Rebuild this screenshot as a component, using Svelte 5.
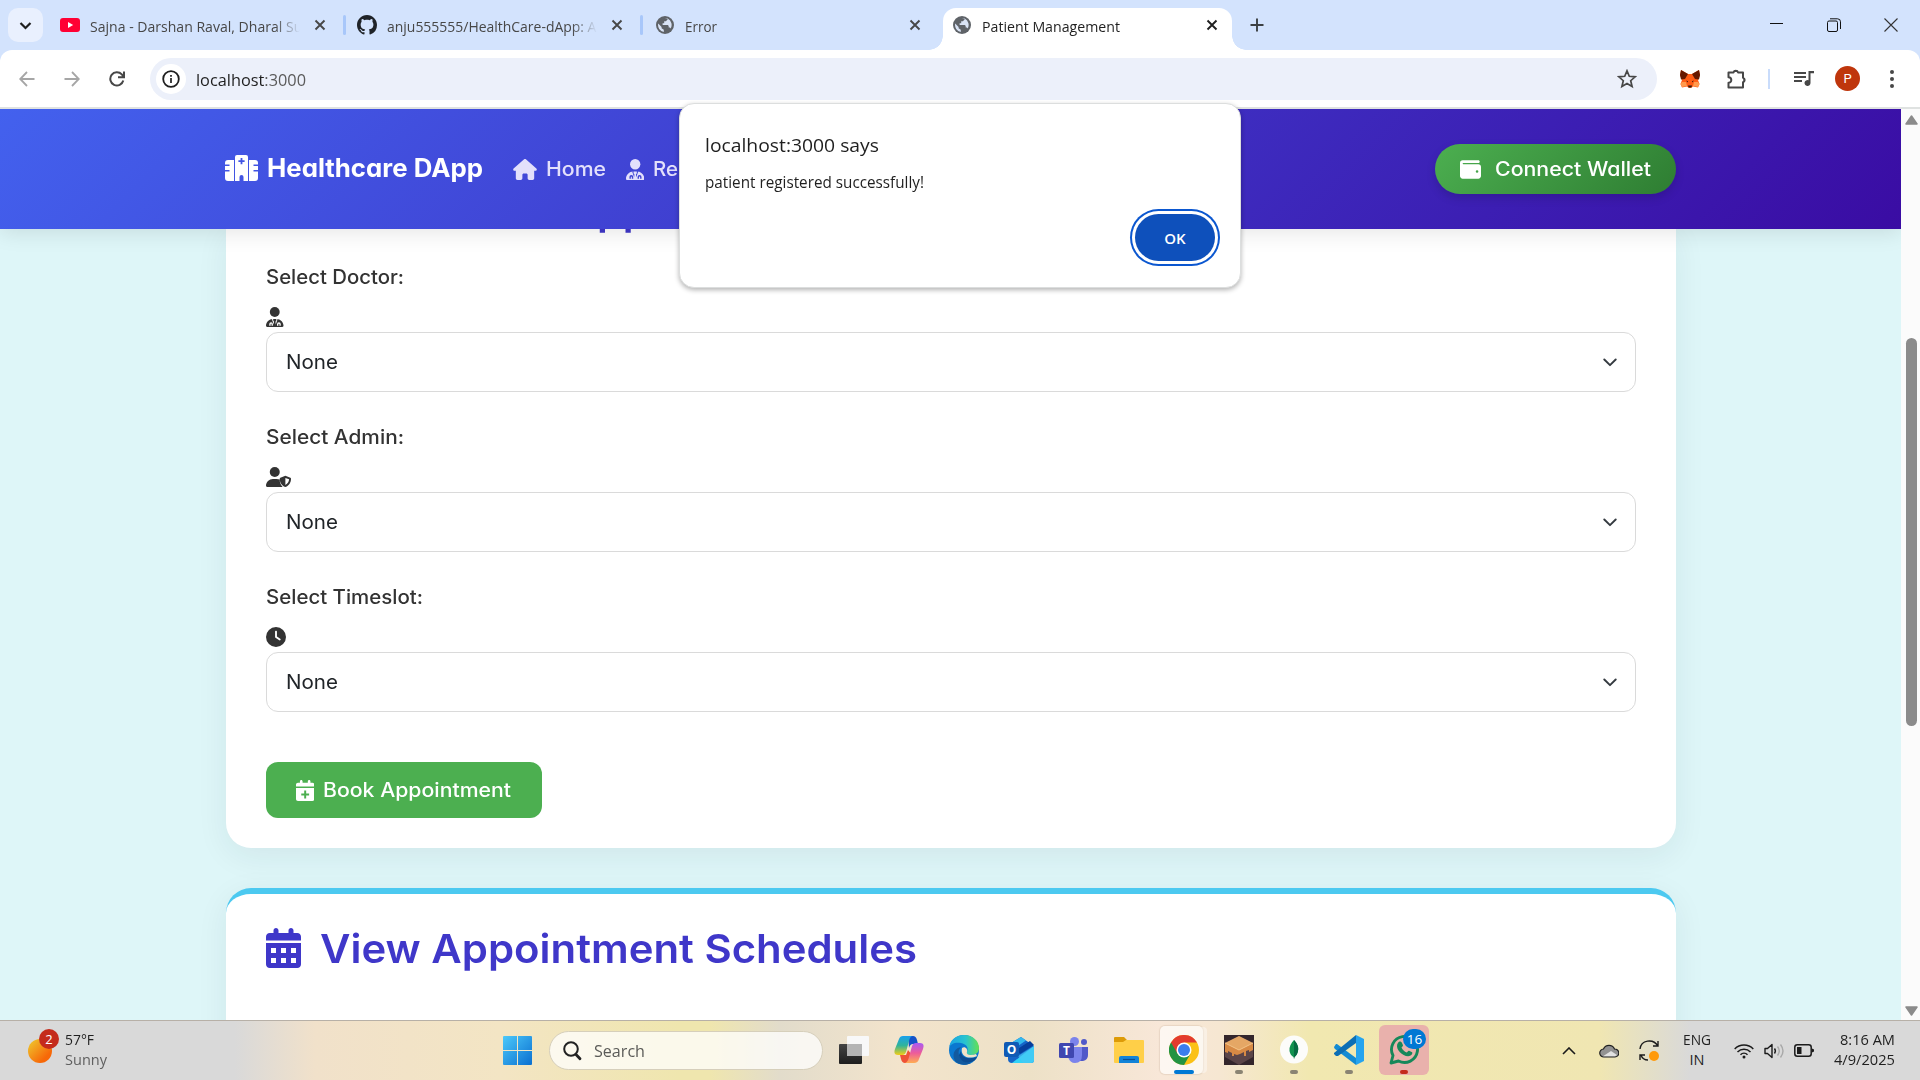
<script>
  // Stretches or condenses a label horizontally so that it occupies the given width.
  function fit(node, width) {
    const natural = node.getBoundingClientRect().width;
    node.style.transform = `scaleX(${width / natural})`;
    node.style.marginRight = width - natural + 'px';
  }

  const fields = [
    { label: 'Select Doctor:', width: 138, icon: 'doctor' },
    { label: 'Select Admin:', width: 138, icon: 'shield' },
    { label: 'Select Timeslot:', width: 157, icon: 'clock' }
  ];
</script>

{#snippet globe()}
  <svg width="18" height="18" viewBox="0 0 18 18">
    <circle cx="9" cy="9" r="9" fill="#5f6368" />
    <path d="M2.2 7.5 5.6 11v1.2l2.2 1.6v2.1A7 7 0 0 1 2.200 7.500zM8 2.100h3.600v1.300L9.900 5.200H8.200v2H6.600v1.700h4.700c.9 0 1.400.7 1.400 1.500v1.200h1.200l.8.8A7 7 0 0 0 12 2.800l-.4-.2A7 7 0 0 0 8 2.100z" fill="#d9e3f5" />
  </svg>
{/snippet}

{#snippet cross()}
  <svg class="cross" width="12" height="12" viewBox="0 0 12 12"><path d="m1.500 1.500 9 9m0-9-9 9" stroke="currentColor" stroke-width="1.900" fill="none" /></svg>
{/snippet}

{#snippet doctor(h)}
  <svg width={h * 0.875} height={h} viewBox="0 0 448 512" fill="currentColor" fill-rule="evenodd">
    <circle cx="224" cy="128" r="126" />
    <path d="M0 482c0-98 80-178 178-178h92c98 0 178 80 178 178 0 17-13 30-30 30H30c-17 0-30-13-30-30zM150 306l48 140 8-70-22-30v-42zM298 306l-48 140-8-70 22-30v-42zM84 480v-46a46 46 0 0 1 92 0v46h-34v-44a12 12 0 0 0-24 0v44zM282 440a48 48 0 1 1 96 0v40h-34v-40a14 14 0 1 0-28 0v40h-34z" />
  </svg>
{/snippet}

{#snippet calendar(h, plus)}
  <svg width={h * 0.875} height={h} viewBox="0 0 448 512" fill="currentColor" fill-rule="evenodd">
    <path d="M128 0c17.700 0 32 14.300 32 32v32h128V32c0-17.700 14.300-32 32-32s32 14.300 32 32v32h48c26.500 0 48 21.500 48 48v48H0v-48c0-26.500 21.500-48 48-48h48V32c0-17.700 14.300-32 32-32z" />
    {#if plus}
      <path d="M0 192h448v272c0 26.500-21.500 48-48 48H48c-26.500 0-48-21.500-48-48zM200 256v72h-72v48h72v72h48v-72h72v-48h-72v-72z" />
    {:else}
      <path d="M0 192h448v272c0 26.500-21.500 48-48 48H48c-26.500 0-48-21.500-48-48zM64 256v64h64v-64zm128 0v64h64v-64zm128 0v64h64v-64zM64 384v64h64v-64zm128 0v64h64v-64zm128 0v64h64v-64z" />
    {/if}
  </svg>
{/snippet}

<div class="screen">
  <div class="tabs">
    <div class="search-tabs"><svg width="13" height="9" viewBox="0 0 13 9"><path d="m1.500 2 5 5 5-5" fill="none" stroke="#1f1f1f" stroke-width="2.200" /></svg></div>
    <div class="tab first">
      <svg width="20" height="14" viewBox="0 0 20 14"><rect width="20" height="14" rx="3" fill="#ff0033" /><path d="m8 4 5.200 3L8 10z" fill="#fff" /></svg>
      <div class="title fade"><span use:fit={218}>Sajna - Darshan Raval, Dharal Sur</span></div>
      {@render cross()}
    </div>
    <i class="split"></i>
    <div class="tab second">
      <svg width="20" height="20" viewBox="0 0 16 16"><path fill="#1f2328" d="M8 0C3.580 0 0 3.580 0 8c0 3.540 2.290 6.530 5.470 7.590.4.070.55-.17.55-.38 0-.19-.01-.82-.01-1.490-2.010.37-2.530-.49-2.690-.94-.09-.23-.48-.94-.82-1.130-.28-.15-.68-.52-.01-.53.63-.01 1.080.58 1.230.82.72 1.210 1.870.87 2.330.66.070-.52.28-.87.51-1.070-1.780-.2-3.640-.89-3.640-3.950 0-.87.31-1.590.82-2.150-.08-.2-.36-1.020.08-2.120 0 0 .67-.21 2.200.82.64-.18 1.320-.27 2-.27s1.360.09 2 .27c1.530-1.040 2.200-.82 2.200-.82.44 1.100.16 1.920.08 2.120.51.56.82 1.270.82 2.150 0 3.070-1.870 3.750-3.650 3.950.29.25.54.73.54 1.480 0 1.070-.01 1.930-.01 2.200 0 .21.15.46.55.38A8.010 8.010 0 0 0 16 8c0-4.420-3.580-8-8-8z" /></svg>
      <div class="title fade"><span use:fit={218}>anju555555/HealthCare-dApp: An</span></div>
      {@render cross()}
    </div>
    <i class="split"></i>
    <div class="tab third">
      {@render globe()}
      <div class="title"><span use:fit={32}>Error</span></div>
      {@render cross()}
    </div>
    <div class="tab active">
      {@render globe()}
      <div class="title"><span use:fit={138}>Patient Management</span></div>
      {@render cross()}
    </div>
    <svg class="plus" width="14" height="14" viewBox="0 0 14 14"><path d="M7 .5v13M.5 7h13" stroke="#3c4043" stroke-width="1.900" /></svg>
    <div class="window">
      <svg width="14" height="14" viewBox="0 0 14 14"><path d="M0 5.500h13" stroke="#111" /></svg>
      <svg width="14" height="14" viewBox="0 0 14 14" fill="none" stroke="#111"><rect x=".5" y="3" width="10" height="10.500" rx="1.500" /><path d="M3 .8h7.500a3 3 0 0 1 3 3V11" /></svg>
      <svg width="14" height="14" viewBox="0 0 14 14"><path d="m.5.5 13 13m0-13-13 13" stroke="#333" stroke-width="1.100" /></svg>
    </div>
  </div>

  <div class="toolbar-wrap">
    <div class="toolbar">
      <div class="nav">
        <svg width="16" height="16" viewBox="0 0 16 16" fill="none" stroke="#a6a6a6" stroke-width="1.800"><path d="M15.500 8H1.500M8 1 1.200 8 8 15" /></svg>
        <svg width="16" height="16" viewBox="0 0 16 16" fill="none" stroke="#a6a6a6" stroke-width="1.800"><path d="M.5 8h14M8 1l6.800 7L8 15" /></svg>
        <svg width="16" height="16" viewBox="0 0 16 16" fill="none" stroke="#474747" stroke-width="2"><path d="M14.300 9.500A6.600 6.600 0 1 1 12.800 3.400L14.500 5.500M15 .5v5.800H9" /></svg>
      </div>
      <div class="omnibox">
        <div class="info"><svg width="18" height="18" viewBox="0 0 18 18" fill="none" stroke="#1f1f1f"><circle cx="9" cy="9" r="7.800" stroke-width="1.800" /><path d="M9 8v5M9 5v1.700" stroke-width="1.700" /></svg></div>
        <div class="url"><span use:fit={110}><b>localhost</b>:3000</span></div>
        <svg class="star" width="20" height="20" viewBox="0 0 20 20"><path d="m10 1.800 2.300 5.500 5.900.5-4.500 3.900 1.400 5.800-5.100-3.100-5.100 3.100 1.400-5.800-4.500-3.900 5.900-.5z" fill="none" stroke="#474747" stroke-width="1.700" /></svg>
      </div>
      <div class="extensions">
        <svg width="20" height="18" viewBox="0 0 20 18">
          <path d="M1 0l7 4h4l7-4 1 5-2 5 1.500 4-1.500 3.500-5-1-2 1.500H9l-2-1.500-5 1L.5 14 2 10 0 5z" fill="#ff5c16" /><path d="M1 0l7 4-3 5-4 .5L0 5zM19 0l-7 4 3 5 4 .5 1-4.500z" fill="#661800" />
          <path d="M2 12h4l1 4-5 1-1.500-3zM18 12h-4l-1 4 5 1 1.500-3z" fill="#ff9a4d" /><path d="M6 10.500l2 .7-.3 1.300zM14 10.500l-2 .7.3 1.300zM8 15.500h4l-.5 2h-3z" fill="#33190f" />
        </svg>
        <svg width="22" height="22" viewBox="0 0 22 22"><path d="M2.500 4.500h5a2.400 2.400 0 0 1 4.600 0H17v5.300a2.300 2.300 0 0 1 0 4.400v5.300H2.500v-4.700a2.800 2.800 0 0 0 0-5.600z" fill="none" stroke="#474747" stroke-width="2" stroke-linejoin="round" /><path d="M7.500 4a2.400 2.400 0 0 1 4.600 0zM17.500 9.800v4.400a2.300 2.300 0 0 0 0-4.400z" fill="#474747" /></svg>
        <i class="rule"></i>
        <svg width="20" height="16" viewBox="0 0 20 16" fill="#474747"><path d="M0 1h12v2H0zM0 5h12v2H0zM0 9h8v2H0zM14.500 0H20v2.200h-3.500V12a3 3 0 1 1-2-2.800z" /></svg>
        <div class="avatar">P</div>
        <svg width="4" height="18" viewBox="0 0 4 18" fill="#474747"><circle cx="2" cy="2" r="2" /><circle cx="2" cy="9" r="2" /><circle cx="2" cy="16" r="2" /></svg>
      </div>
    </div>
  </div>

  <div class="viewport">
    <div class="page">
      <header>
        <svg width="33" height="26" viewBox="0 0 33 26" fill="#fff" fill-rule="evenodd"><path d="M12 0h9a2 2 0 0 1 2 2v24h-4.500v-4a2 2 0 0 0-4 0v4H10V2a2 2 0 0 1 2-2zM15.600 3v2.200h-2.200v1.800h2.200v2.200h1.800V7h2.200V5.200h-2.200V3zM3 5h6v21H3a3 3 0 0 1-3-3v-6.500h4.500v-1.500H0v-4h4.500V9.500H0V8a3 3 0 0 1 3-3zM24 5h6a3 3 0 0 1 3 3v1.500h-4.500V11H33v4h-4.500v1.500H33V23a3 3 0 0 1-3 3h-6z" /></svg>
        <div class="brand"><span use:fit={216}>Healthcare DApp</span></div>
        <div class="link home">
          <svg width="24" height="21" viewBox="0 0 576 512" fill="currentColor"><path d="M575.800 255.500c0 18-15 32.100-32 32.100h-32l.7 160.200c0 2.700-.2 5.400-.5 8.100V472c0 22.100-17.900 40-40 40H392c-22.100 0-40-17.900-40-40v-88c0-17.700-14.300-32-32-32h-64c-17.700 0-32 14.300-32 32v88c0 22.100-17.900 40-40 40h-80c-22.100 0-40-17.900-40-40V287.600H32c-18 0-32-14-32-32.100 0-9 3-17 10-24L266.400 8c7-7 15-8 22-8s15 2 21 7l255.400 224.500c8 7 12 15 11 24z" /></svg>
          <span use:fit={60}>Home</span>
        </div>
        <div class="link reg">{@render doctor(21)}<span use:fit={25}>Re</span></div>
        <button class="wallet">
          <svg width="21" height="21" viewBox="0 0 512 512" fill="#fff"><path d="M64 32C28.700 32 0 60.700 0 96v320c0 35.300 28.700 64 64 64h384c35.300 0 64-28.700 64-64V192c0-35.300-28.700-64-64-64H80c-8.800 0-16-7.200-16-16s7.200-16 16-16h368c17.700 0 32-14.300 32-32s-14.300-32-32-32zm352 240a32 32 0 1 1 0 64 32 32 0 1 1 0-64z" /></svg>
          <span use:fit={156}>Connect Wallet</span>
        </button>
      </header>
      <main>
        <section class="card booking">
          <h2 class="scrolled"><span use:fit={246}>Schedule an </span><span use:fit={258}>Appointment</span></h2>
          {#each fields as field}
            <div class="field">
              <div class="label"><span use:fit={field.width}>{field.label}</span></div>
              <div class="glyph">
                {#if field.icon === 'doctor'}
                  {@render doctor(20)}
                {:else if field.icon === 'shield'}
                  <svg width="25" height="20" viewBox="0 0 640 512" fill="currentColor" fill-rule="evenodd"><circle cx="224" cy="128" r="128" /><path d="M178 304h92c29 0 56 7 80 19 0 75 24 139 75 185-3 3-8 4-11 4H30c-17 0-30-13-30-30 0-98 80-178 178-178zM496 226l128 50c8 3 16 12 16 22 0 80-33 171-144 214-111-43-144-134-144-214 0-10 8-19 16-22zm0 53v180c63-31 91-85 95-143z" /></svg>
                {:else}
                  <svg width="20" height="20" viewBox="0 0 512 512" fill="currentColor" fill-rule="evenodd"><path d="M256 0a256 256 0 1 1 0 512A256 256 0 1 1 256 0zM232 120v136c0 8 4 15.500 10.700 20l96 64c11 7.400 25.900 4.400 33.300-6.700s4.400-25.900-6.700-33.300L280 243.200V120c0-13.300-10.700-24-24-24s-24 10.700-24 24z" /></svg>
                {/if}
              </div>
              <div class="select">
                <span use:fit={52}>None</span>
                <svg width="14" height="9" viewBox="0 0 14 9"><path d="m1.300 1.500 5.700 5.700 5.700-5.700" fill="none" stroke="#343a40" stroke-width="1.900" stroke-linecap="round" stroke-linejoin="round" /></svg>
              </div>
            </div>
          {/each}
          <button class="book">{@render calendar(21, true)}<span use:fit={188}>Book Appointment</span></button>
        </section>
        <section class="card schedules">
          <h2>{@render calendar(40, false)}<span use:fit={597}>View Appointment Schedules</span></h2>
        </section>
      </main>
    </div>
    <div class="scrollbar">
      <svg width="13" height="10" viewBox="0 0 13 10"><path d="M6.500 1 12 9H1z" fill="#8b8b8b" stroke="#8b8b8b" stroke-linejoin="round" stroke-width="1.500" /></svg>
      <i></i>
      <svg class="down" width="13" height="10" viewBox="0 0 13 10"><path d="M6.500 9 12 1H1z" fill="#8b8b8b" stroke="#8b8b8b" stroke-linejoin="round" stroke-width="1.500" /></svg>
    </div>
  </div>

  <div class="taskbar">
    <div class="weather">
      <div class="sun"><b>2</b></div>
      <div class="lines"><span use:fit={29}>57°F</span><span class="dim" use:fit={42}>Sunny</span></div>
    </div>
    <svg class="start" width="29" height="29" viewBox="0 0 29 29">
      <defs><linearGradient id="win" x1="0" y1="0" x2="1" y2="1" gradientUnits="objectBoundingBox"><stop stop-color="#4cc9fa" /><stop offset="1" stop-color="#0a6fd0" /></linearGradient></defs>
      <path d="M1 0h13v14H0V1q0-1 1-1zM15 0h13q1 0 1 1v13H15zM0 15h14v14H1q-1 0-1-1zM15 15h14v13q0 1-1 1H15z" fill="url(#win)" />
    </svg>
    <div class="search">
      <svg width="19" height="20" viewBox="0 0 19 20" fill="none" stroke="#222" stroke-linecap="round"><circle cx="8" cy="8" r="6.800" stroke-width="2" /><path d="m13 13.500 4 4.300" stroke-width="2.800" /></svg>
      <span use:fit={51}>Search</span>
    </div>
    <div class="apps">
      <div class="app"><svg viewBox="0 0 30 30"><defs><linearGradient id="tv" x1="0" y1="0" x2="0" y2="1"><stop stop-color="#444" /><stop offset="1" stop-color="#1d1d1d" /></linearGradient></defs><rect x="0" y="9" width="23" height="20" rx="1" fill="url(#tv)" /><rect x="8" y="1" width="22" height="20" rx="1" fill="#f8f8f8" /><path d="M8 9h15v12H8z" fill="#b4b4b4" /></svg></div>
      <div class="app"><svg viewBox="0 0 30 30">
        <defs>
          <linearGradient id="c1" x1="0" y1="0" x2="0" y2="1"><stop stop-color="#18a0ee" /><stop offset=".5" stop-color="#30b49a" /><stop offset="1" stop-color="#f4cd16" /></linearGradient>
          <linearGradient id="c2" x1="0" y1="0" x2="0" y2="1"><stop stop-color="#a95af4" /><stop offset=".5" stop-color="#ed5c9a" /><stop offset="1" stop-color="#ffad53" /></linearGradient>
        </defs>
        <path d="M14 1h5q3 0 4 4l1 4h-5q-3 0-4 4z" fill="#1553c9" />
        <path d="M17 1H9Q6 1 5 4L1 14q-2 6 3 6h5q2 0 3-3l3-11q1-5 4-5z" fill="url(#c1)" />
        <path d="M6 20h6l2-5 4 5-3 8H11q-3 0-4-4z" fill="#ee5237" />
        <path d="M13 28h7q4 0 5-4l4-10q2-6-3-6h-4q-3 0-4 3l-3 11q-1 5-4 6z" fill="url(#c2)" />
      </svg></div>
      <div class="app"><svg viewBox="0 0 30 30">
        <defs><linearGradient id="e1"><stop stop-color="#1ba3e4" /><stop offset=".55" stop-color="#29c4cf" /><stop offset="1" stop-color="#65e052" /></linearGradient></defs>
        <circle cx="15" cy="15" r="15" fill="#0b78d0" />
        <path d="M0 13C1 5 7 0 15 0c9 0 15 6 15 13 0 5-4 7-8 7-3 0-5-1-4-3 2-5-1-8-6-9C6 7 1 9 0 13z" fill="url(#e1)" />
        <path d="M10 15c-2 7 4 13 12 13-5 3-11 2-15-1-5-6-2-14 5-15z" fill="#125a9f" />
        <path d="M12 16c0 6 6 9 16 6l-1 2c-7 7-16 3-17-4z" fill="#0c4b91" />
        <path d="M13 13c3-2 6 1 5 4-1 3 4 4 9 2l1 2c-9 4-17 0-15-8z" fill="#f1e2c8" />
      </svg></div>
      <div class="app"><svg viewBox="0 0 30 30"><path d="M4 10 17 2l13 9v14q0 3-3 3H8q-4 0-4-4z" fill="#1565c8" /><path d="M4 10 17 2l5 3.500L8 15z" fill="#34b9ee" /><path d="m12 15 14-9 4 4-14 9z" fill="#073f9c" /><path d="M30 11v14q0 3-3 3H8l22-17z" fill="#31d2f7" /><path d="M30 11 14 21l5 7h8q3 0 3-3z" fill="#49c8f3" opacity=".7" /><rect y="7" width="15" height="15" rx="2" fill="#0f5ab5" /></svg><em class="o">O</em></div>
      <div class="app"><svg viewBox="0 0 30 30"><circle cx="15.500" cy="6.500" r="4.500" fill="#7b83eb" /><circle cx="25" cy="7" r="3" fill="#5059c9" /><path d="M19 12h10v8q0 5-5 6h-5z" fill="#5059c9" /><path d="M9 12h14v8q0 8-7 8-5 0-7-6z" fill="#7b83eb" /><rect y="8" width="15" height="15" rx="1.500" fill="#4047b0" /></svg><em class="t">T</em></div>
      <div class="app"><svg viewBox="0 0 30 30"><path d="M0 3q0-1 1-1h9l3 3h16v7H0z" fill="#dd9b08" /><path d="M0 7h9l3-2h17q1 0 1 1v21q0 1-1 1H1q-1 0-1-1z" fill="#ffcf48" /><path d="M5 28v-5q0-2 2-2h16q2 0 2 2v5z" fill="#1283d8" /><path d="M9 24.500h12" stroke="#0b4f94" stroke-width="1.200" /></svg></div>
      <div class="app chrome"><svg viewBox="0 0 30 30"><circle cx="15" cy="15" r="15" fill="#fbc116" /><path d="M15 15 2 7.500A15 15 0 0 0 15 30l6.500-11.300z" fill="#229342" /><path d="M15 15V7.500h13A15 15 0 0 0 2 7.500l6.500 11z" fill="#e33b2e" /><circle cx="15" cy="15" r="7.500" fill="#fff" /><circle cx="15" cy="15" r="6" fill="#3b7ded" /></svg><i class="run wide"></i></div>
      <div class="app"><svg viewBox="0 0 30 30"><path d="M0 0h30v30H0z" fill="#34262c" /><path d="m15 1 14 7v14l-14 8-14-8V8z" fill="#5b4548" /><path d="M1 8v9l3 1v-2l4 2v3h2v-2l3 1 3-1 4-2v4h2v-5l3-1v2l4-2V8l-14 6z" fill="#d78a45" /><path d="m15 1 14 7-14 7L1 8z" fill="#e5a765" /><path d="m1 8 14 7 14-7" fill="none" stroke="#f4c488" /></svg><i class="run"></i></div>
      <div class="app"><svg viewBox="0 0 30 30"><circle cx="15" cy="14.500" r="14" fill="#fcfcfa" /><path d="M15 5c3 3 5 7 4 11-.5 3-2 5-3.500 6L15 24l-.5-2c-2-1-3.500-3-4-6-.5-4 1.500-8 4.500-11z" fill="#12924f" /><path d="M15 5c3 3 5 7 4 11-.5 3-2 5-3.500 6L15 24z" fill="#076b42" /></svg><i class="run"></i></div>
      <div class="app"><svg viewBox="0 0 30 30"><path d="m22 0 8 4v22l-8 4z" fill="#25a4ef" /><path d="m3 9 19 14v7L1 14q-1-1-1-2l2-3z" fill="#138bd3" /><path d="M22 0v8L4 21H2l-2-2v-1z" fill="#0b6eb5" /></svg><i class="run"></i></div>
      <div class="app whatsapp"><svg viewBox="0 0 30 30"><path d="m2 28 2-7.500A13 13 0 1 1 9.500 26z" fill="none" stroke="#16885a" stroke-width="2.900" stroke-linejoin="round" /><path d="M9 8c1-2 3-2 4 0l1 2.300c0 1-1 1.500-1.500 2.200 1.200 2.500 2.800 4 5.300 5 .8-.7 1.200-2 2.300-1.700l3 1.500c1 1-1 4-4 4-6 0-12-7-11-11 0-1 .3-1.800.9-2.300z" fill="#16885a" /></svg><b>16</b><i class="run red"></i></div>
    </div>
    <div class="tray">
      <svg width="14" height="8" viewBox="0 0 14 8"><path d="m1 7 6-6 6 6" fill="none" stroke="#1b1b1b" stroke-width="1.600" /></svg>
      <svg width="20" height="14" viewBox="0 0 20 14"><path d="M5 13a4 4 0 0 1-.5-8A6 6 0 0 1 15.500 5 4 4 0 0 1 16 13z" fill="#929292" stroke="#202020" stroke-width="1.200" /><path d="M4 12.300 12 7l6 4-2 1.300z" fill="#e2e2e2" /></svg>
      <svg width="20" height="21" viewBox="0 0 20 21" fill="none" stroke="#1b1b1b" stroke-width="1.400"><path d="M1 9C2 0 14-2 19 6M19 1v5h-5M9 20c-3 0-6-2-7-5M1 20v-5h5" /><circle cx="15" cy="16" r="5" fill="#ff9a0a" stroke="none" /></svg>
      <div class="lines lang"><span use:fit={28}>ENG</span><span class="in">IN</span></div>
      <svg width="20" height="16" viewBox="0 0 20 16" fill="none" stroke="#1b1b1b" stroke-width="1.500"><path d="M.7 6a13 13 0 0 1 18.600 0M3.500 9a9.200 9.200 0 0 1 13 0M6.500 11.700a5 5 0 0 1 7 0" /><circle cx="10" cy="14" r="1.500" fill="#1b1b1b" stroke="none" /></svg>
      <svg width="20" height="16" viewBox="0 0 20 16" fill="none" stroke="#1b1b1b" stroke-width="1.400"><path d="M1 5.500h2.500L8 1.500v13l-4.500-4H1zM10.500 5.500q1.800 2.500 0 5" stroke-linejoin="round" /><path d="M13.500 3.500q3.600 4.500 0 9M16.500 1.500q5 6.500 0 13" stroke="#a9a9a9" /></svg>
      <svg width="20" height="13" viewBox="0 0 20 13"><rect x=".8" y=".8" width="16.400" height="11.400" rx="2.500" fill="none" stroke="#1b1b1b" stroke-width="1.500" /><path d="M3 3h4.500v7H3zM18 4.500l2 1v2l-2 1z" fill="#1b1b1b" /></svg>
      <div class="lines clock"><span use:fit={55}>8:16 AM</span><span use:fit={61}>4/9/2025</span></div>
    </div>
  </div>

  <div class="dialog">
    <div class="head"><span use:fit={174}>localhost:3000 says</span></div>
    <div class="message"><span use:fit={219}>patient registered successfully!</span></div>
    <button class="ok">OK</button>
  </div>
</div>

<style>
  :global(body) { overflow: hidden; }
  * { box-sizing: border-box; }
  svg { display: block; flex: none; }
  span { display: inline-block; flex: none; white-space: pre; transform-origin: left center; }
  button { border: 0; font: inherit; padding: 0; }
  .screen {
    position: relative; width: 1920px; height: 1080px; overflow: hidden;
    display: flex; flex-direction: column;
    font-family: "Open Sans", "Noto Sans", sans-serif; color: #1f1f1f;
  }

  .tabs { height: 50px; flex: none; background: #d3e3fd; display: flex; align-items: flex-start; padding-left: 8px; }
  .search-tabs { width: 35px; height: 34px; margin-top: 8px; border-radius: 10px; background: #e9f0fe; display: grid; place-items: center; }
  .tab { height: 42px; margin-top: 8px; padding-bottom: 8px; display: flex; align-items: center; font-size: 15px; color: #474747; }
  .tab .title { flex: 1; min-width: 0; margin-left: 11px; padding-top: 1px; overflow: hidden; line-height: 22px; white-space: nowrap; }
  .first { width: 300px; padding-left: 17px; padding-right: 17px; }
  .second { width: 294px; padding-left: 11px; padding-right: 17px; }
  .third { width: 300px; padding-left: 13px; padding-right: 22px; }
  .first .title, .second .title { margin-left: 10px; margin-right: 14px; }
  .fade { mask-image: linear-gradient(to right, #000 88%, transparent 100%); }
  .split { width: 3px; height: 20px; border-radius: 2px; background: #a8c7fa; margin-top: 15px; }
  .active { position: relative; width: 289px; border-radius: 13px 13px 0 0; background: #fff; color: #1f1f1f; padding-left: 10px; padding-right: 14px; }
  .active::before, .active::after { content: ""; position: absolute; bottom: 0; width: 14px; height: 14px; }
  .active::before { left: -14px; background: radial-gradient(circle at 0 0, transparent 13.500px, #fff 14px); }
  .active::after { right: -14px; background: radial-gradient(circle at 100% 0, transparent 13.500px, #fff 14px); }
  .plus { margin: 18px 0 0 18px; }
  .window { margin: 18px 22px 0 auto; display: flex; gap: 43px; }

  .toolbar-wrap { height: 59px; flex: none; background: #d3e3fd; }
  .toolbar { height: 59px; background: #fff; border-radius: 12px 12px 0 0; border-bottom: 2px solid #dfe2e1; display: flex; align-items: center; }
  .nav { display: flex; gap: 29px; padding-left: 19px; width: 150px; }
  .omnibox { width: 1507px; height: 42px; margin-top: 1px; border-radius: 21px; background: #ecf0fa; display: flex; align-items: center; padding: 0 20px 0 6px; }
  .info { width: 30px; height: 30px; border-radius: 50%; background: #fff; display: grid; place-items: center; }
  .url { margin-left: 10px; font-size: 17px; white-space: nowrap; color: #5a5a5a; }
  .url b { font-weight: 400; color: #1f1f1f; }
  .star { margin-left: auto; }
  .extensions { flex: 1; display: flex; align-items: center; padding-left: 23px; }
  .extensions svg:nth-of-type(2) { margin-left: 26px; }
  .rule { width: 2px; height: 20px; margin-left: 20px; background: #c9dcfb; }
  .extensions svg:nth-of-type(3) { margin-left: 24px; }
  .avatar { width: 25px; height: 25px; margin: 0 30px 0 21px; border-radius: 50%; background: #bf360c; color: #fff; display: grid; place-items: center; font: 13px Roboto, sans-serif; }

  .viewport { height: 911px; flex: none; display: flex; overflow: hidden; }
  .page { width: 1901px; height: 911px; background: #def6f8; font-family: Inter, sans-serif; font-feature-settings: "cv11"; overflow: hidden; }
  header { position: relative; z-index: 1; height: 120px; display: flex; align-items: center; padding: 0 225px; background: linear-gradient(135deg, #4361ee, #3a0ca3); box-shadow: 0 4px 20px rgba(0, 0, 0, .1); color: #fff; }
  header > svg { margin-top: -2px; }
  .brand { margin: -3px 0 0 9px; font-size: 25.500px; font-weight: 650; width: 216px; white-space: nowrap; }
  .link { display: flex; align-items: center; gap: 9px; color: #e3e0fb; font-size: 20px; font-weight: 500; }
  .home { margin-left: 30px; width: 113px; }
  .wallet { width: 241px; height: 50px; margin-left: auto; border-radius: 25px; display: flex; align-items: center; gap: 14px; padding-left: 25px; color: #fff; font-size: 19.500px; font-weight: 550; background: linear-gradient(135deg, #4caf50, #2e7d32); box-shadow: 0 4px 10px rgba(0, 0, 0, .15); }
  main { padding: 0 225px 0 226px; color: #333; }
  .card { width: 1450px; background: #fff; box-shadow: 0 8px 32px rgba(31, 38, 60, .07); }
  .booking { height: 619px; border-radius: 0 0 25px 25px; padding: 0 40px; }
  h2 { margin: 0; color: #3f37c9; font-size: 40px; font-weight: 600; line-height: 48px; display: flex; align-items: center; }
  .scrolled { height: 30px; padding-left: 55px; align-items: flex-start; }
  .scrolled span { margin-top: -42px; }
  .field { height: 160px; }
  .label { height: 36px; font-size: 19.500px; font-weight: 480; line-height: 36px; }
  .glyph { height: 37px; padding-top: 12px; }
  .select { height: 60px; border: 1px solid #dadada; border-radius: 12px; display: flex; align-items: center; justify-content: space-between; padding: 0 18px 0 19px; color: #212529; font-size: 20px; }
  .book { width: 276px; height: 56px; margin-top: 23px; border-radius: 12px; background: #4caf50; color: #fff; display: flex; align-items: center; gap: 9px; padding-left: 30px; font-size: 19.500px; font-weight: 500; }
  .schedules { height: 300px; margin-top: 40px; border-top: 6px solid #4cc9f0; border-radius: 25px; padding: 29px 40px; }
  .schedules h2 { gap: 19px; }
  .schedules span { padding-top: 2px; }
  .scrollbar { width: 19px; background: #fbfbfb; display: flex; flex-direction: column; align-items: center; padding-top: 6px; padding-left: 1px; }
  .scrollbar i { width: 11px; height: 388px; margin-top: 213px; border-radius: 6px; background: #8b8b8b; }
  .down { margin-top: 280px; }

  .taskbar {
    height: 60px; flex: none; display: flex; align-items: center; border-top: 1px solid #b7b0a7;
    background: linear-gradient(90deg, #d9d9d9 0, #d9d9d9 235px, #f1e1ca 315px, #f3e5c4 500px, #efe6ae 680px, #efe6ae 710px, #e2dccb 780px, #f3e4cc 900px, #ede1c7 1030px, #f8e7d8 1160px, #f6e7d2 1220px, #f1e8b0 1310px, #f0e6b2 1600px, #d9d9d9 1690px, #d9d9d9 100%);
  }
  .weather { width: 503px; display: flex; padding-left: 28px; }
  .sun { position: relative; width: 24px; height: 24px; margin-top: 7px; border-radius: 50%; background: linear-gradient(135deg, #efc02b 10%, #f76808 75%); }
  .sun b { position: absolute; left: 11px; top: -10px; width: 20px; height: 20px; border-radius: 50%; background: #c42b1c; color: #fff; font-size: 13px; font-weight: 400; line-height: 20px; text-align: center; }
  .lines { display: flex; flex-direction: column; align-items: flex-start; margin-top: -2px; font-size: 14.500px; line-height: 20px; white-space: nowrap; }
  .weather .lines { margin-left: 13px; }
  .dim { color: #606060; }
  .search { width: 274px; height: 39px; margin-left: 17px; border-radius: 20px; background: rgba(255, 255, 255, .75); border: 1px solid #d6cfbb; display: flex; align-items: center; gap: 12px; padding-left: 13px; font-size: 17px; color: #5b5b58; }
  .apps { display: flex; gap: 5px; margin-left: 6px; margin-top: -1px; }
  .app { position: relative; width: 50px; height: 50px; display: grid; place-items: center; border-radius: 6px; }
  .app > svg { width: 30px; height: 30px; }
  .app em { position: absolute; left: 10px; top: 17px; width: 15px; color: #fff; font: 700 12px/15px "Open Sans", sans-serif; text-align: center; }
  .app .t { top: 18px; }
  .chrome::before { content: ""; position: absolute; left: 1px; top: 1px; width: 43px; height: 48px; border-radius: 5px; background: rgba(255, 255, 255, .65); box-shadow: 5px 0 0 -1px rgba(255, 255, 255, .4), 0 0 1px 1px rgba(120, 90, 60, .12); }
  .chrome > svg { position: relative; }
  .run { position: absolute; left: 21px; bottom: 1px; width: 8px; height: 4px; border-radius: 2px; background: #8a8473; }
  .run.wide { left: 15px; width: 20px; background: #0078d4; }
  .run.red { background: #c42b1c; }
  .whatsapp { background: #e9b1ac; }
  .whatsapp b { position: absolute; left: 24px; top: 4px; width: 23px; height: 20px; border-radius: 10px; background: #0078d4; color: #fff; font-size: 13.500px; font-weight: 400; line-height: 20px; text-align: center; }
  .tray { display: flex; align-items: center; margin-left: 133px; gap: 20px; }
  .tray > svg:nth-of-type(1) { margin-right: 3px; }
  .lang { width: 28px; margin-left: 4px; }
  .in { align-self: center; }
  .lang + svg { margin-left: 3px; }
  .tray > svg:nth-of-type(5), .tray > svg:nth-of-type(6) { margin-left: -10px; }
  .clock { align-items: flex-end; width: 61px; }

  .dialog { position: absolute; z-index: 2; left: 679px; top: 103px; width: 562px; height: 185px; border: 1px solid #dcdede; border-radius: 15px; background: #fff; box-shadow: 0 2px 5px rgba(0, 0, 0, .3); padding: 24px 25px; display: flex; flex-direction: column; }
  .head { font-size: 19px; font-weight: 500; line-height: 34px; }
  .message { margin-top: 8px; font-size: 15.500px; line-height: 24px; }
  .ok { width: 80px; height: 47px; flex: none; margin: 20px 0 0 auto; border-radius: 24px; background: #0e50bb; color: #fff; font-size: 15px; font-weight: 600; box-shadow: 0 0 0 3px #fff, 0 0 0 5px #0b57d0; }
</style>
